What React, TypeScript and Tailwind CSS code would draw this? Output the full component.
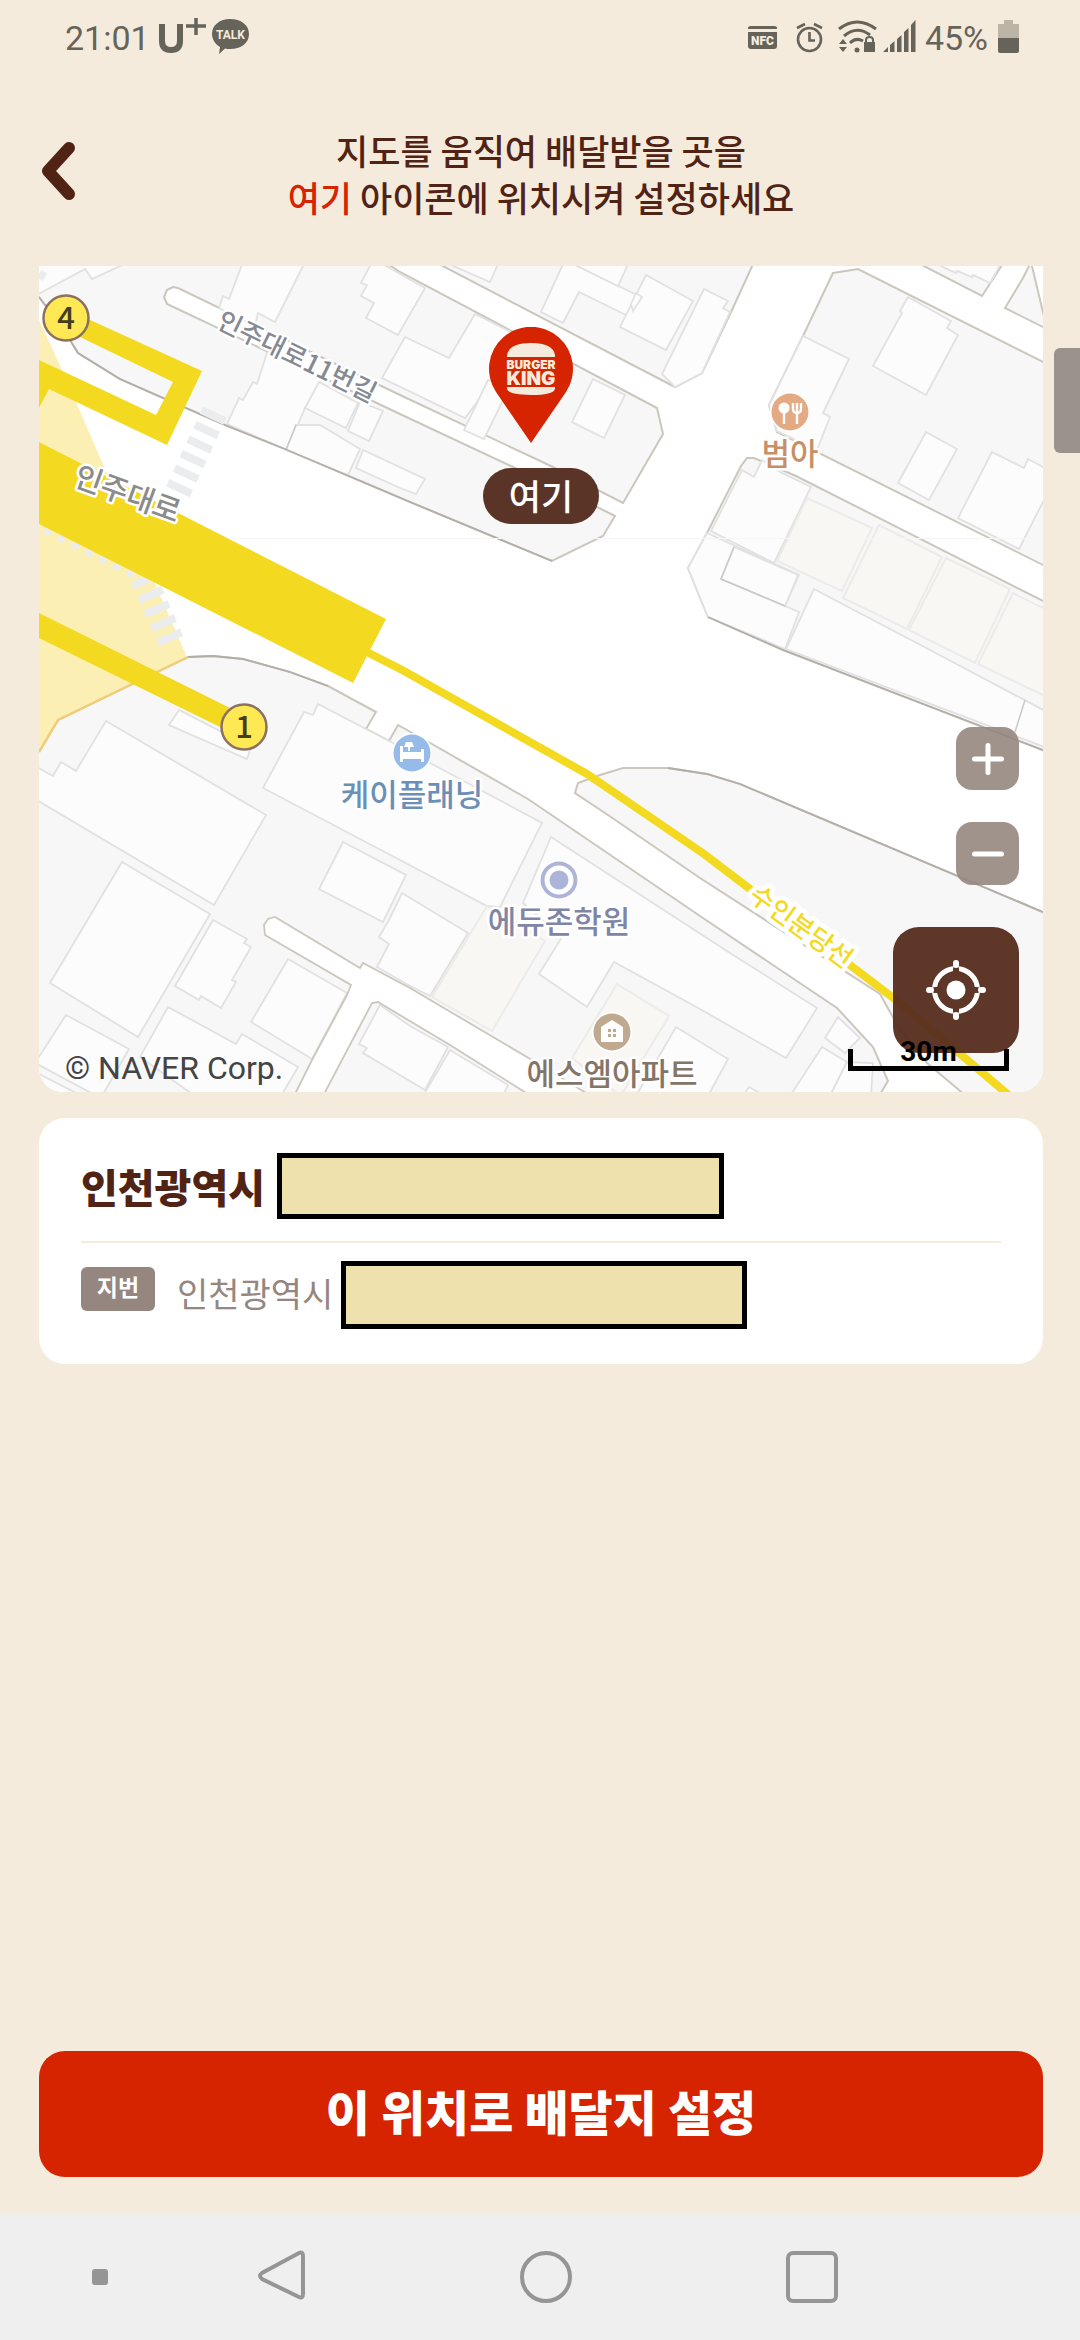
import type { ReactNode } from "react";

// Blocks of land between the streets
const blocks = [
  "0,31 6,39 31,74 39,87 81,113 124,132 186,159 246,183 371,236 513,295 564,270 576,250 558,241 474,201 361,148 128,38 125,31 128,24 134,21 139,22 361,129 514,201 584,237 624,168 618,142 361,6 346,-4 -4,-4 -4,26",
  "396,-4 636,121 663,107 693,44 715,-4",
  "794,7 819,3 1008,98 1008,301 738,166 730,139 764,70",
  "877,-4 943,30 965,-4",
  "992,-4 984,12 966,42 1008,63",
  "708,192 715,192 757,210 1008,337 1008,486 744,384 669,351 649,302 668,267 702,200",
  "536,527 539,517 561,509 584,502 629,502 668,508 701,518 1008,648 1008,830 927,830 888,797 861,764 841,728 661,612 569,549",
  "149,391 174,390 204,393 251,406 289,420 337,446 327,463 350,475 359,459 393,478 489,533 661,650 798,742 834,781 849,815 840,830 -4,830 -4,465",
];

const deadEndStreet =
  "226,669 225,659 229,653 236,651 321,702 324,697 371,722 493,794 552,830 492,830 411,779 339,736 333,737 284,830 255,830 273,794 308,729 312,719";

const buildings = [
  "204,-4 190,33 184,30 180,42 216,60 219,47 236,56 266,-4",
  "228,87 218,118 214,116 204,134 200,132 188,158 248,184 266,142 284,112",
  "266,142 307,162 319,137 280,116",
  "309,165 330,175 344,145 321,136",
  "257,159 281,159 321,183 309,209 247,184",
  "324,184 386,213 377,228 361,222 317,202",
  "333,-4 322,17 328,19 322,30 335,37 327,52 359,69 386,22 340,-4",
  "366,71 410,92 436,48 480,70 450,120 426,152 343,112",
  "449,114 425,164 445,173 470,122",
  "554,113 586,129 565,172 533,156",
  "-4,30 46,3 53,13 90,-4 -4,-4",
  "405,-4 451,16 460,-4",
  "525,-4 502,46 524,57 540,26 587,49 602,31 530,-4",
  "530,-4 579,20 590,-4",
  "607,9 581,61 627,84 654,35",
  "594,45 603,31 597,27 592,38",
  "665,23 623,108 636,121 663,107 691,46 684,42 689,35",
  "764,70 810,93 784,147 791,151 778,184 738,165 730,139",
  "869,31 912,55 908,62 919,69 887,129 834,100 863,47 861,45",
  "887,166 918,183 890,234 859,217",
  "953,186 985,202 989,193 1008,203 1008,228 980,283 919,252",
  "893,-4 917,7 918,5 933,11 934,9 951,17 963,-4",
  "723,194 715,211 703,204 672,265 735,297 772,221 741,206",
  "668,267 760,309 746,340 760,346 746,383 669,351 649,302",
  "695,281 759,309 746,340 682,313",
  "775,323 891,384 1008,446 1008,482 747,383",
  "-4,500 14,510 22,496 37,505 67,455 227,549 175,639 -4,533",
  "83,596 171,648 99,771 11,717",
  "174,654 208,673 205,677 212,681 193,714 197,716 182,742 162,730 160,734 136,720",
  "249,693 308,727 273,793 212,756",
  "27,749 90,783 63,830 58,830 -4,797",
  "-4,806 43,830 -4,830",
  "129,741 197,778 203,768 259,801 242,830 156,830 101,791",
  "140,444 130,459 208,493 212,481",
  "265,446 274,449 279,438 350,475 393,498 503,557 461,641 448,640 361,594 224,522",
  "304,576 367,609 344,656 280,623",
  "363,627 429,667 391,730 371,720 338,701 350,678 340,671 350,654",
  "512,571 691,687 778,742 747,792 661,743 575,696 548,741 500,708 523,671 484,637",
  "637,761 689,793 669,830 597,830",
  "799,751 821,772 806,787 786,772",
  "783,781 808,796 791,830 751,830",
  "808,796 834,797 832,830 791,830",
  "710,821 726,830 704,830",
];

const shops = [
  "768,232 833,262 803,325 738,295",
  "840,259 903,291 868,363 804,332",
  "907,292 971,323 936,397 870,364",
  "974,327 1008,344 1008,431 939,398",
  "448,640 506,675 453,765 393,731",
  "578,718 630,750 599,801 582,830 533,792",
];

const lowerBuildings = [
  "341,739 320,778 328,782 324,787 386,824 409,781 371,760",
  "411,784 469,819 464,830 384,830",
];

type PlaceProps = {
  x: number;
  y: number;
  name: string;
  color: string;
  textColor: string;
  children: ReactNode;
};

function Place({ x, y, name, color, textColor, children }: PlaceProps) {
  return (
    <g transform={`translate(${x} ${y})`}>
      <circle r="20" fill="#fff" />
      <circle r="18.5" fill={color} />
      {children}
      <text
        y="53"
        textAnchor="middle"
        fill={textColor}
        stroke="#fff"
        strokeWidth="5"
        strokeLinejoin="round"
        paintOrder="stroke"
        className="text-[31px] font-medium"
      >
        {name}
      </text>
    </g>
  );
}

function Exit({ x, y, label }: { x: number; y: number; label: string }) {
  return (
    <g transform={`translate(${x} ${y})`}>
      <circle r="22.5" fill="#fee853" stroke="#8c7163" strokeWidth="2.5" />
      <text y="11" textAnchor="middle" fill="#453d1f" className="text-[31px] font-medium">
        {label}
      </text>
    </g>
  );
}

function MapCanvas() {
  return (
    <svg
      viewBox="0 0 1004 826"
      preserveAspectRatio="xMidYMid slice"
      className="block h-full w-full"
      role="img"
      aria-label="지도"
    >
      <rect width="1004" height="826" fill="#fff" />
      <g fill="#f7f7f7" stroke="#cbc7be" strokeWidth="2">
        {blocks.map((points) => (
          <polygon key={points} points={points} />
        ))}
      </g>
      <g fill="#fcfcfc" stroke="#e1e1e1" strokeWidth="1.8">
        {buildings.map((points) => (
          <polygon key={points} points={points} />
        ))}
      </g>
      <g fill="#f8f7f3" stroke="#ebebe9" strokeWidth="2">
        {shops.map((points) => (
          <polygon key={points} points={points} />
        ))}
      </g>
      <path d="M986 434 976 466M257 159 247 184M695 281 682 313 746 340" fill="none" stroke="#c9c9c9" strokeWidth="1.5" />
      <polygon points={deadEndStreet} fill="#fff" stroke="#cbc7be" strokeWidth="1.8" />
      <g fill="#fcfcfc" stroke="#e1e1e1" strokeWidth="1.8">
        {lowerBuildings.map((points) => (
          <polygon key={points} points={points} />
        ))}
      </g>
      <g fill="none" stroke="#b3aea8" strokeWidth="1.8">
        <path d="M0 31 6 39 31 74 39 87 81 113 124 132 186 159 246 183 371 236 513 295" />
        <path d="M669 351 744 384 1004 484M629 502 668 508 701 518 1004 646" />
        <path d="M149 391 174 390 204 393 251 406 289 420" />
      </g>
      <path d="M0 272.5H1004" stroke="#f6f6f6" />

      {/* station area, crossings and underground passages */}
      <polygon points="0,54 23,104 148,391 19,454 0,486" fill="#fcefb4" />
      <path d="M149 391 19 454 0 486" fill="none" stroke="#efcd7a" strokeWidth="2.5" />
      <path d="M0 8 6 11" stroke="#ebecee" strokeWidth="9" />
      <path d="M176 146 136 232" stroke="#ebecee" strokeWidth="26" strokeDasharray="8 8" />
      <path d="M104 311 133 377" stroke="#ebecee" strokeWidth="26" strokeDasharray="8 7.5" />
      <path d="M6 263 100 311" stroke="#ebecee" strokeWidth="9" strokeDasharray="7 8.5" />
      <g fill="#f4d921">
        <polygon points="0,176 347,353 314,417 0,258" />
        <polygon points="49,53 163,105 128,179 10,123 0,142 0,94 117,149 134,116 41,71" />
        <polygon points="0,347 0,372 183,462 191,442" />
      </g>
      <path d="M326 385 365 405 548 508 665 588 861 737 972 831" fill="none" stroke="#f4d921" strokeWidth="8" />
      <Exit x={27} y={52} label="4" />
      <Exit x={205} y={461} label="1" />

      <g stroke="#fff" strokeLinejoin="round" paintOrder="stroke" textAnchor="middle">
        <text transform="translate(254 99) rotate(26)" fill="#858a92" strokeWidth="5" className="text-[26px] font-medium">
          인주대로11번길
        </text>
        <text transform="translate(85 238) rotate(20)" fill="#8b8b8b" strokeWidth="5" className="text-[30px] font-medium">
          인주대로
        </text>
        <text transform="translate(757 668) rotate(36)" fill="#f4d921" strokeWidth="9" className="text-[26px] font-medium">
          수인분당선
        </text>
      </g>

      <Place x={751} y={146} name="범아" color="#e4aa83" textColor="#c98e66">
        <circle cx="-6" cy="-4" r="5.5" fill="#fff" />
        <path d="M-6 0V12M7 0V12M3-9V-3Q3 1 7 1T11-3V-9M7-9V0" fill="none" stroke="#fff" strokeWidth="2.4" />
      </Place>
      <Place x={373} y={487} name="케이플래닝" color="#96bbe9" textColor="#6c8fb8">
        <path d="M-12-7V9H-9V6H9V9H12V-4H9V-1H-9V-7ZM-6-11H0L2-6H-2V-2H-4V-6H-8Z" fill="#fff" />
      </Place>
      <Place x={520} y={614} name="에듀존학원" color="#acb4d8" textColor="#7f86a5">
        <circle r="12" fill="none" stroke="#fff" strokeWidth="5" />
      </Place>
      <Place x={573} y={766} name="에스엠아파트" color="#bfaa90" textColor="#857468">
        <path d="M-11 10V-5L0-12 11-5V10Z" fill="#fff" />
        <path d="M-4-3H-1V0H-4ZM1-3H4V0H1ZM-4 2H-1V5H-4ZM1 2H4V5H1Z" fill="#bfaa90" />
      </Place>
      <text x="26" y="813" fill="#444" className="font-['Roboto'] text-[32px]">
        © NAVER Corp.
      </text>
    </svg>
  );
}

function Pin() {
  return (
    <svg viewBox="0 0 116 117" className="h-[117px] w-[116px]" aria-label="버거킹">
      <path d="M48 116 13 65A42 42 0 1 1 83 65Z" fill="#d62300" />
      <g fill="#f5ebdc">
        <path d="M24 30V28Q26 16 48 16T72 28V30Z" />
        <path d="M24 60H72V62Q70 68 48 68T24 62Z" />
        <text textAnchor="middle" className="font-['Inter'] text-[12px] font-black">
          <tspan x="48" y="42">
            BURGER
          </tspan>
          <tspan x="48" y="58" className="text-[19px]">
            KING
          </tspan>
        </text>
      </g>
    </svg>
  );
}

function StatusBar() {
  return (
    <div className="flex h-[76px] items-center justify-between pr-[60px] pl-[65px] font-['Roboto'] text-[34px] leading-10 text-[#66635a]">
      <div className="flex items-center">
        <time className="w-[93px]">21:01</time>
        <svg viewBox="0 0 94 40" className="h-10 w-[94px]" fill="currentColor">
          <path d="M4 6V23Q4 32 13 32T22 23V6" fill="none" stroke="currentColor" strokeWidth="6" />
          <path d="M28 8H48M38 -1V17" stroke="currentColor" strokeWidth="3.5" />
          <path d="M72 1C83 1 91 7 91 16S83 31 72 31Q69 31 67 30.5L61 36 62 29C57 26 54 21 54 16 54 7 62 1 72 1Z" />
          <text x="72.5" y="20.5" textAnchor="middle" fill="#f5ebdc" className="text-[12px] font-bold">
            TALK
          </text>
        </svg>
      </div>
      <div className="flex items-center">
        <svg viewBox="0 0 174 40" className="h-10 w-[174px]" fill="currentColor">
          <path d="M1 11V10Q1 8 4 8H27Q30 8 30 10V11ZM1 14H30V28Q30 31 27 31H4Q1 31 1 28Z" />
          <text x="15.5" y="27" textAnchor="middle" fill="#f5ebdc" className="text-[12px] font-black">
            NFC
          </text>
          <g fill="none" stroke="currentColor" strokeWidth="2.6">
            <circle cx="62.5" cy="21.5" r="11.5" />
            <path d="M62.5 14V22.5H68M50 10 58 6M75 10 67 6" />
          </g>
          <g fill="none" stroke="currentColor" strokeWidth="3">
            <path d="M92 11Q110-3 129 11M97 18Q110 7 123 17M103 25Q109 19 116 23" />
          </g>
          <circle cx="110" cy="32" r="2.5" />
          <path d="M92 26 96 21 100 26ZM92 29H100L96 34ZM117 24H128V34H117Z" />
          <path d="M119 24V22Q119 19 122.5 19T126 22V24" fill="none" stroke="currentColor" strokeWidth="2" />
          <path d="M136 34 141 29V34ZM143 27 147.5 23V34H143ZM150 21 154.5 17V34H150ZM157 14 161.5 10V34H157ZM164 7 168.5 2V34H164Z" />
        </svg>
        <span className="mx-1">45%</span>
        <svg viewBox="0 0 28 40" className="h-10 w-7">
          <path d="M6 6H12V2H21V6H27V21H6Z" fill="#bbb4a7" />
          <path d="M6 20H27V33Q27 35 25 35H8Q6 35 6 33Z" fill="#66635a" />
        </svg>
      </div>
    </div>
  );
}

function SystemNav() {
  return (
    <nav className="grid h-[126px] grid-cols-[50fr_41fr_91fr_42fr_46fr] items-center justify-items-center bg-[#efefef] text-[#959595]">
      <span className="size-4 rounded-[3px] bg-[#959595]" />
      <button type="button" aria-label="뒤로">
        <svg viewBox="0 0 52 56" className="h-14 w-[52px]" fill="none" stroke="currentColor" strokeWidth="4">
          <path d="M43 4Q47 2 47 7V45Q47 50 43 48L6 30Q2 27 6 24Z" />
        </svg>
      </button>
      <button type="button" aria-label="홈">
        <svg viewBox="0 0 56 56" className="size-14" fill="none" stroke="currentColor" strokeWidth="4">
          <circle cx="28" cy="28" r="24" />
        </svg>
      </button>
      <button type="button" aria-label="최근 앱">
        <svg viewBox="0 0 56 56" className="size-14" fill="none" stroke="currentColor" strokeWidth="4">
          <rect x="4" y="4" width="48" height="48" rx="5" />
        </svg>
      </button>
    </nav>
  );
}

export default function App() {
  return (
    <div className="relative flex min-h-screen flex-col bg-[#f5ebdc] font-['Noto_Sans_CJK_KR',sans-serif] text-[#502314]">
      <StatusBar />
      <header className="grid h-[190px] grid-cols-[48px_1fr_48px] items-center pr-[37px] pl-[39px]">
        <button type="button" aria-label="이전">
          <svg viewBox="0 0 48 64" className="h-16 w-12" fill="none" stroke="currentColor" strokeWidth="12" strokeLinecap="round" strokeLinejoin="round">
            <path d="M30 9 9 32 30 55" />
          </svg>
        </button>
        <h1 className="pt-1 text-center text-[35px] leading-[47px] font-medium">
          지도를 움직여 배달받을 곳을
          <br />
          <span className="text-[#d62300]">여기</span> 아이콘에 위치시켜 설정하세요
        </h1>
      </header>

      <main className="flex grow flex-col pr-[37px] pb-[37px] pl-[39px]">
        <section className="relative h-[826px] overflow-hidden rounded-b-3xl">
          <MapCanvas />
          <div className="absolute top-[61px] left-1/2 flex -translate-x-1/2 flex-col items-center gap-6">
            <Pin />
            <span className="flex h-14 w-[116px] items-center justify-center rounded-full bg-[#5a3426] pb-1 text-[35px] leading-none font-medium text-white">
              여기
            </span>
          </div>
          <div className="absolute right-6 bottom-[39px] flex flex-col items-end text-white">
            <button type="button" aria-label="확대" className="flex size-[63px] items-center justify-center rounded-2xl bg-[#96877f]/90">
              <svg viewBox="0 0 36 36" className="size-9" stroke="currentColor" strokeWidth="5" strokeLinecap="round">
                <path d="M4.5 18H31.5M18 4.5V31.5" />
              </svg>
            </button>
            <button type="button" aria-label="축소" className="mt-8 flex size-[63px] items-center justify-center rounded-2xl bg-[#96877f]/90">
              <svg viewBox="0 0 36 36" className="size-9" stroke="currentColor" strokeWidth="5" strokeLinecap="round">
                <path d="M4.5 18H31.5" />
              </svg>
            </button>
            <button type="button" aria-label="현재 위치" className="mt-[42px] flex size-[126px] items-center justify-center rounded-[26px] bg-[#562c1e]/95">
              <svg viewBox="0 0 62 62" className="size-[62px]" fill="none" stroke="currentColor">
                <circle cx="31" cy="31" r="21.5" strokeWidth="5" />
                <path d="M31 10V14M31 48V52M10 31H14M48 31H52" stroke="#5e3628" strokeWidth="6" strokeLinecap="round" />
                <path d="M31 4V6M31 56V58M4 31H6M56 31H58" strokeWidth="6" strokeLinecap="round" />
                <circle cx="31" cy="31" r="9.5" fill="currentColor" stroke="none" />
              </svg>
            </button>
          </div>
          <div className="absolute right-[34px] bottom-[21px] flex h-[22px] w-[161px] items-end justify-center border-x-[5px] border-b-[5px] border-black">
            <span className="font-['Roboto'] text-[28px] leading-7 font-bold text-black">30m</span>
          </div>
        </section>

        <section className="mt-[26px] rounded-[26px] bg-white px-[42px] pt-[35px] pb-[35px]">
          <div className="flex items-center gap-3 border-b-2 border-[#f5ebdc] pb-[22px]">
            <strong className="text-[40px] leading-[60px] font-black">인천광역시</strong>
            <span className="h-[66px] w-[447px] border-[5px] border-black bg-[#eee1ae]" />
          </div>
          <div className="flex items-center pt-[18px] text-[#95867f]">
            <span className="-mt-3 mr-[22px] flex h-11 w-[74px] items-start justify-center rounded-[6px] bg-[#95867f] text-[23px] leading-[38px] font-bold text-white">
              지번
            </span>
            <span className="pb-1 text-[34px] leading-[50px]">인천광역시</span>
            <span className="ml-2 h-[68px] w-[406px] border-[5px] border-black bg-[#eee1ae]" />
          </div>
        </section>

        <button type="button" className="mt-auto h-[126px] rounded-[26px] bg-[#d62300] pb-2 text-[48px] font-black text-white">
          이 위치로 배달지 설정
        </button>
      </main>
      <SystemNav />
      <div className="absolute top-[348px] right-0 h-[105px] w-[26px] rounded-l-md bg-[#99938c]" />
    </div>
  );
}
